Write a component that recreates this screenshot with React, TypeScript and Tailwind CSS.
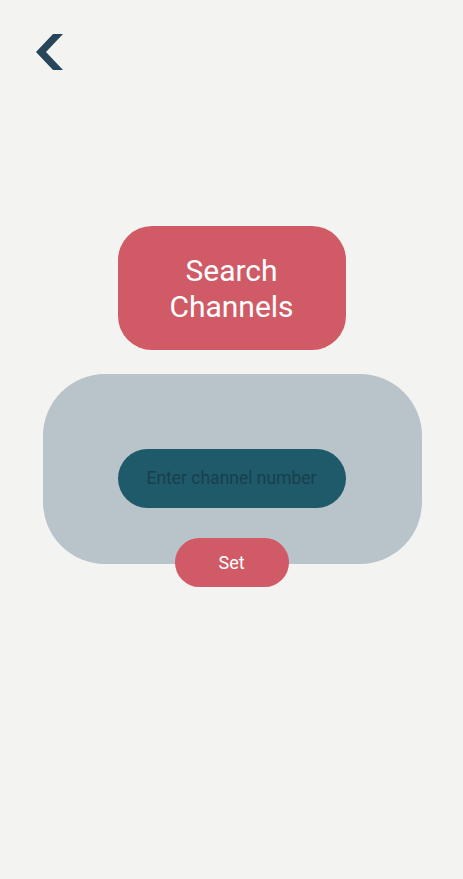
import React from "react";

export default function App() {
  return (
    <div
      className="w-[463px] h-[879px] bg-[#f3f3f2] flex flex-col"
      style={{ fontFamily: "Roboto, 'Noto Sans', sans-serif" }}
    >
      <div className="h-[226px] pl-[36px] pt-[34px]">
        <svg width="27" height="36" viewBox="0 0 27 36">
          <polygon points="17,0 27,0 10,18 27,36 17,36 0,18" fill="#27465c" />
        </svg>
      </div>
      <div className="flex flex-col items-center">
        <button className="w-[228px] h-[124px] rounded-[34px] bg-[#d05a66] text-white text-[30px] leading-[36px] flex flex-col items-center justify-center pt-[2px]">
          <span>Search</span>
          <span>Channels</span>
        </button>
        <div className="mt-[24px] ml-[2px] w-[379px] h-[190px] rounded-[62px] bg-[#b8c3ca] flex items-start justify-center pt-[75px]">
          <div className="-ml-[2px] w-[228px] h-[59px] rounded-full bg-[#1e5a6a] flex items-center justify-center text-[17.5px] text-[#193f4d]">
            Enter channel number
          </div>
        </div>
        <button className="-mt-[26px] w-[114px] h-[49px] rounded-full bg-[#d05a66] text-white text-[18px] flex items-center justify-center">
          Set
        </button>
      </div>
    </div>
  );
}
